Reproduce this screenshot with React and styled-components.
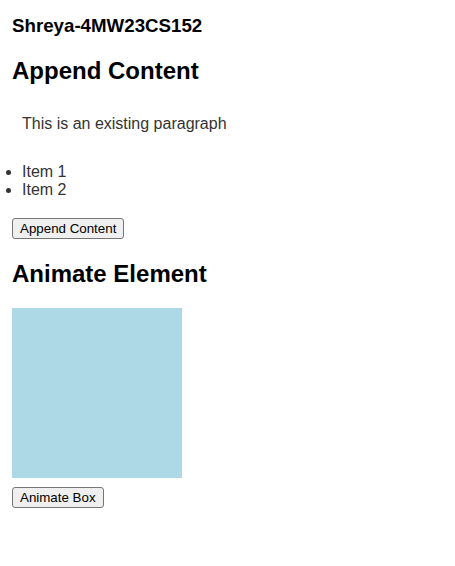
import React from "react";
import styled, { createGlobalStyle } from "styled-components";

const Global = createGlobalStyle`
  html, body { margin: 0; padding: 0; background: #fff; }
  body { font-family: "Liberation Sans", Arial, sans-serif; color: #000; }
`;

const Page = styled.div`
  padding: 0 12px;
  display: flow-root;
`;

const Title = styled.h3`
  font-size: 18.72px;
  font-weight: bold;
  margin: 15px 0 0;
`;

const Heading = styled.h2`
  font-size: 24px;
  font-weight: bold;
  margin: ${(p) => p.$top}px 0 0;
`;

const Paragraph = styled.p`
  font-size: 16px;
  color: #333;
  margin: 20px 0 0;
  padding: 10px 0 0 10px;
`;

const List = styled.ul`
  font-size: 16px;
  color: #333;
  margin: 29.5px 0 0;
  padding-left: 10px;
`;

const Button = styled.button`
  display: block;
  font-family: "Liberation Sans", Arial, sans-serif;
  font-size: 13.33px;
  color: #000;
  background: #efefef;
  border: 1px solid #767676;
  border-radius: 3px;
  padding: 2px 7px;
  margin-top: ${(p) => p.$top}px;
  cursor: pointer;
`;

const Box = styled.div`
  width: 170px;
  height: 170px;
  background: lightblue;
  margin-top: 20px;
`;

export default function App() {
  return (
    <>
      <Global />
      <Page>
        <Title>Shreya-4MW23CS152</Title>
        <Heading $top={20}>Append Content</Heading>
        <Paragraph>This is an existing paragraph</Paragraph>
        <List>
          <li>Item 1</li>
          <li>Item 2</li>
        </List>
        <Button $top={19}>Append Content</Button>
        <Heading $top={21}>Animate Element</Heading>
        <Box />
        <Button $top={9}>Animate Box</Button>
      </Page>
    </>
  );
}
